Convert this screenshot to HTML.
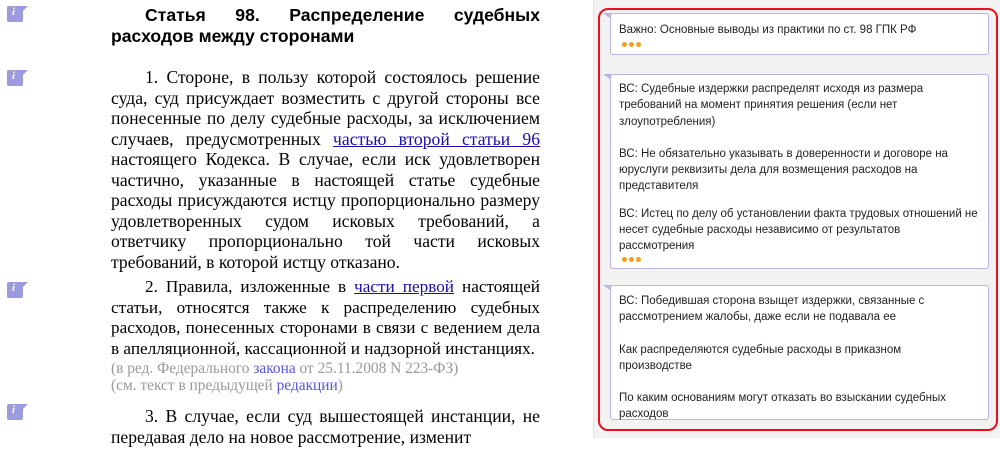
<!DOCTYPE html>
<html><head><meta charset="utf-8"><style>
body{margin:0;width:1000px;height:438px;overflow:hidden;background:#fff;position:relative;font-family:"Liberation Serif",serif}
.ic{position:absolute;left:7px;width:16px;height:16px;background:#9d9be0;border-radius:2px}
.ic:after{content:"";position:absolute;left:15px;top:0;border-top:6px solid #9d9be0;border-right:6px solid transparent}
.ic span{position:absolute;left:5px;top:0;color:#fff;font:italic bold 11px "Liberation Serif",serif}
.main{position:absolute;left:111px;top:5px;width:429px;text-align:justify;color:#000}
h1{margin:0;font:bold 17.6px/21px "Liberation Sans",sans-serif;text-indent:34px;text-align:justify}
p{margin:0 0 5px;font-size:17.6px;line-height:20.5px;text-indent:34px}
a{color:#1a0dab;text-decoration:underline}
.g{color:#999;font-size:15.4px;line-height:17px;text-indent:0;text-align:left;margin-bottom:12px}
.g a{color:#5555ee;text-decoration:none}
.side{position:absolute;left:593px;top:0;width:407px;height:438px;background:#f2f2f2;border-left:1px solid #e4e4e4}
.red{position:absolute;left:598px;top:8px;width:396px;height:419px;border:2px solid #e8101a;border-radius:10px}
.card{position:absolute;left:610px;width:379px;background:#fff;border:1px solid #b8b4e4;border-radius:3px;font:11.5px/16.3px "Liberation Sans",sans-serif;color:#222;padding:5px 3px 0 8px;box-sizing:border-box;white-space:nowrap}
.card:before{content:"";position:absolute;left:-8px;top:-1px;border-top:6px solid #b8b4e4;border-left:8px solid transparent}
.card div{margin-bottom:16px}
.dots{position:absolute;left:11px;width:40px;height:6px}
.dots i{float:left;width:5px;height:5px;border-radius:50%;background:#f0a020;margin-right:2px}
</style></head><body>
<div class="ic" style="top:6px"><span>i</span></div>
<div class="ic" style="top:70px"><span>i</span></div>
<div class="ic" style="top:282px"><span>i</span></div>
<div class="ic" style="top:404px"><span>i</span></div>
<div class="main">
<h1>Статья 98. Распределение судебных расходов между сторонами</h1>
<p style="margin-top:20px">1. Стороне, в пользу которой состоялось решение суда, суд присуждает возместить с другой стороны все понесенные по делу судебные расходы, за исключением случаев, предусмотренных <a>частью второй статьи 96</a> настоящего Кодекса. В случае, если иск удовлетворен частично, указанные в настоящей статье судебные расходы присуждаются истцу пропорционально размеру удовлетворенных судом исковых требований, а ответчику пропорционально той части исковых требований, в которой истцу отказано.</p>
<p style="font-size:17.2px">2. Правила, изложенные в <a>части первой</a> настоящей статьи, относятся также к распределению судебных расходов, понесенных сторонами в связи с ведением дела в апелляционной, кассационной и надзорной инстанциях.</p>
<p class="g" style="margin-top:-4px">(в ред. Федерального <a>закона</a> от 25.11.2008 N 223-ФЗ)<br>(см. текст в предыдущей <a>редакции</a>)</p>
<p>3. В случае, если суд вышестоящей инстанции, не передавая дело на новое рассмотрение, изменит</p>
</div>
<div class="side"></div>
<div class="red"></div>
<div class="card" style="top:13px;height:42px;padding-top:8px">Важно: Основные выводы из практики по ст. 98 ГПК РФ<span class="dots" style="top:28px"><i></i><i></i><i></i></span></div>
<div class="card" style="top:74px;height:195px;padding-top:6px">
<div>ВС: Судебные издержки распределят исходя из размера<br>требований на момент принятия решения (если нет<br>злоупотребления)</div>
<div style="margin-bottom:11px">ВС: Не обязательно указывать в доверенности и договоре на<br>юруслуги реквизиты дела для возмещения расходов на<br>представителя</div>
<div>ВС: Истец по делу об установлении факта трудовых отношений не<br>несет судебные расходы независимо от результатов<br>рассмотрения</div>
<span class="dots" style="top:182px"><i></i><i></i><i></i></span></div>
<div class="card" style="top:285px;height:135px;padding-top:7px">
<div>ВС: Победившая сторона взыщет издержки, связанные с<br>рассмотрением жалобы, даже если не подавала ее</div>
<div>Как распределяются судебные расходы в приказном<br>производстве</div>
<div>По каким основаниям могут отказать во взыскании судебных<br>расходов</div>
</div>
</body></html>
